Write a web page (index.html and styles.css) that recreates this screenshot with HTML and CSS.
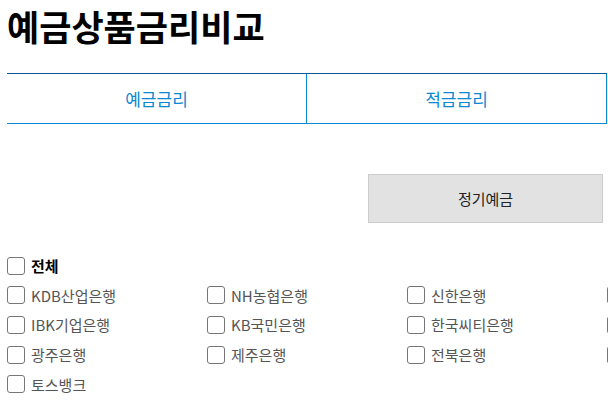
FILE: index.html
```html
<!DOCTYPE html>
<html lang="ko">
<head>
    <meta charset="UTF-8">
    <meta name="viewport" content="width=device-width, initial-scale=1.0">
    <title>예금상품금리비교</title>
    <link rel="stylesheet" href="styles.css">
</head>
<body>
    <div class="container">
        <h1>예금상품금리비교</h1>

        <ul class="tabs">
            <li class="tab">예금금리</li>
            <li class="tab">적금금리</li>
        </ul>

        <div class="product-row">
            <button class="product-btn">정기예금</button>
        </div>

        <div class="bank-all">
            <label class="check-item check-all"><input type="checkbox"> 전체</label>
        </div>
        <div class="bank-list">
            <label class="check-item"><input type="checkbox"> KDB산업은행</label>
            <label class="check-item"><input type="checkbox"> NH농협은행</label>
            <label class="check-item"><input type="checkbox"> 신한은행</label>
            <label class="check-item"><input type="checkbox" aria-label="우리은행"></label>
            <label class="check-item"><input type="checkbox"> IBK기업은행</label>
            <label class="check-item"><input type="checkbox"> KB국민은행</label>
            <label class="check-item"><input type="checkbox"> 한국씨티은행</label>
            <label class="check-item"><input type="checkbox" aria-label="하나은행"></label>
            <label class="check-item"><input type="checkbox"> 광주은행</label>
            <label class="check-item"><input type="checkbox"> 제주은행</label>
            <label class="check-item"><input type="checkbox"> 전북은행</label>
            <label class="check-item"><input type="checkbox" aria-label="경남은행"></label>
            <label class="check-item"><input type="checkbox"> 토스뱅크</label>
        </div>
    </div>
</body>
</html>
```

FILE: styles.css
```css
body {
    font-family: "Noto Sans CJK KR", "Noto Sans", sans-serif;
    background-color: #fff;
    color: #000;
    margin: 0;
    padding: 0;
    overflow: hidden;
}

.container {
    width: 800px;
    padding-left: 7px;
}

h1 {
    font-size: 35px;
    font-weight: 700;
    line-height: 51px;
    margin: 0;
    letter-spacing: 0;
}

.tabs {
    display: flex;
    width: 600px;
    list-style: none;
    margin: 22px 0 0 0;
    padding: 0;
    border-top: 1px solid #0b5696;
    border-bottom: 1px solid #0a88d2;
}

.tab {
    box-sizing: border-box;
    width: 300px;
    height: 49px;
    display: flex;
    align-items: center;
    justify-content: center;
    border-right: 1px solid #0a88d2;
    color: #0a88d2;
    font-size: 17px;
}

.product-row {
    display: flex;
    justify-content: flex-end;
    width: 596px;
    margin-top: 50px;
}

.product-btn {
    width: 235px;
    height: 49px;
    background-color: #e2e2e2;
    border: 1px solid #cccccc;
    font-family: inherit;
    font-size: 15px;
    color: #222;
    padding: 0;
}

.bank-all {
    margin-top: 28px;
}

.bank-list {
    display: grid;
    grid-template-columns: repeat(4, 200px);
}

.check-item {
    display: flex;
    align-items: center;
    gap: 6px;
    height: 29.6px;
    font-size: 15px;
    color: #555;
}

.check-all {
    font-weight: 700;
    color: #000;
}

.check-item input {
    appearance: none;
    box-sizing: border-box;
    width: 18px;
    height: 18px;
    margin: 0;
    border: 1px solid #767676;
    border-radius: 3px;
    background: #fff;
}
```
